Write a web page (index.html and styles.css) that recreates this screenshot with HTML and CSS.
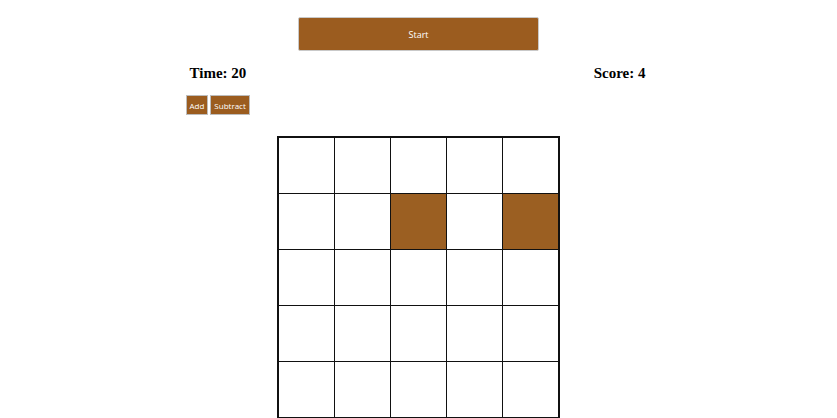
FILE: index.html
```html
<!DOCTYPE html>
<html>
<head>
<meta charset="utf-8">
<link rel="stylesheet" href="styles.css">
</head>
<body>
<div class="app">
  <button class="start">Start</button>
  <div class="stats">
    <div class="stat">Time: 20</div>
    <div class="stat">Score: 4</div>
  </div>
  <div class="controls">
    <button class="ctrl">Add</button>
    <button class="ctrl">Subtract</button>
  </div>
  <div class="board">
    <div class="cell"></div><div class="cell"></div><div class="cell"></div><div class="cell"></div><div class="cell"></div>
    <div class="cell"></div><div class="cell"></div><div class="cell on"></div><div class="cell"></div><div class="cell on"></div>
    <div class="cell"></div><div class="cell"></div><div class="cell"></div><div class="cell"></div><div class="cell"></div>
    <div class="cell"></div><div class="cell"></div><div class="cell"></div><div class="cell"></div><div class="cell"></div>
    <div class="cell"></div><div class="cell"></div><div class="cell"></div><div class="cell"></div><div class="cell"></div>
  </div>
</div>
</body>
</html>
```
FILE: styles.css
```css
html, body {
  margin: 0;
  padding: 0;
  background: #ffffff;
}
.app {
  display: flex;
  flex-direction: column;
  align-items: center;
  padding-top: 17px;
}
.start {
  width: 241px;
  height: 34px;
  background: #9b5c1f;
  color: #ffffff;
  border: 1px solid #c9c9c9;
  border-radius: 2px;
  font-family: "Open Sans", "Liberation Sans", sans-serif;
  font-size: 9px;
  padding: 0;
  margin: 0;
}
.stats {
  width: 456px;
  display: flex;
  justify-content: space-between;
  margin-top: 14px;
  margin-left: -2px;
}
.stat {
  font-family: "Liberation Serif", "Times New Roman", serif;
  font-weight: bold;
  font-size: 15px;
  line-height: 17px;
}
.controls {
  width: 464px;
  display: flex;
  gap: 2px;
  margin-top: 13px;
  margin-left: -2px;
}
.ctrl {
  height: 20px;
  background: #9b5c1f;
  color: #ffffff;
  border: 1px solid #bdbdbd;
  font-family: "Open Sans", "Liberation Sans", sans-serif;
  font-size: 8px;
  padding: 0 3px;
  margin: 0;
}
.board {
  margin-top: 21px;
  display: grid;
  grid-template-columns: repeat(5, 55px);
  grid-auto-rows: 55px;
  gap: 1px;
  background: #111111;
  border: 2px solid #111111;
  margin-left: -1px;
}
.cell {
  background: #ffffff;
}
.cell.on {
  background: #9b5f22;
}
```
